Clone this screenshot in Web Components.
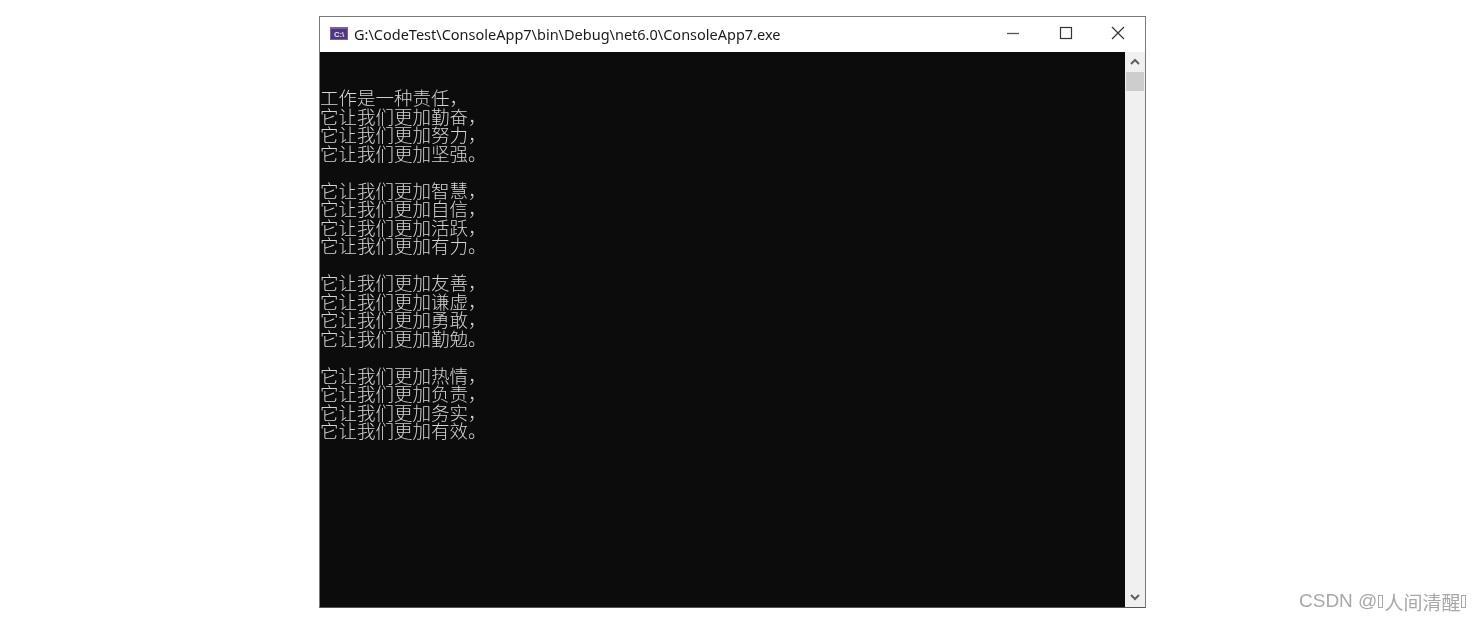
<!DOCTYPE html>
<html lang="zh">
<head>
<meta charset="utf-8">
<title>ConsoleApp7</title>
<style>
  html, body { margin: 0; height: 100%; background: #fff; overflow: hidden; }
</style>
</head>
<body>
<console-page>
  <console-window caption="G:\CodeTest\ConsoleApp7\bin\Debug\net6.0\ConsoleApp7.exe">
    <console-stanza>工作是一种责任，
它让我们更加勤奋，
它让我们更加努力，
它让我们更加坚强。</console-stanza>
    <console-stanza>它让我们更加智慧，
它让我们更加自信，
它让我们更加活跃，
它让我们更加有力。</console-stanza>
    <console-stanza>它让我们更加友善，
它让我们更加谦虚，
它让我们更加勇敢，
它让我们更加勤勉。</console-stanza>
    <console-stanza>它让我们更加热情，
它让我们更加负责，
它让我们更加务实，
它让我们更加有效。</console-stanza>
  </console-window>
  <csdn-mark></csdn-mark>
</console-page>

<script>
// page: window on the left, watermark in the bottom right corner
class ConsolePage extends HTMLElement {
    constructor() {
        super();
        this.attachShadow({mode: "open"});
        this.shadowRoot.innerHTML = `
            <style>
            :host {
                display: flex;
                box-sizing: border-box;
                height: 621px;
                padding: 16px 0 10px 319px;
                gap: 153px;
            }
            </style>
            <slot></slot>
        `;
    }
}

class ConsoleWindow extends HTMLElement {
    constructor() {
        super();
        this.attachShadow({mode: "open"});
        this.shadowRoot.innerHTML = `
            <style>
            :host {
                display: flex;
                flex-direction: column;
                box-sizing: border-box;
                width: 827px;
                height: 592px;
                border: 1px solid #7a7a7a;
                border-bottom-color: #555;
                background: #fff;
            }
            .body {
                flex: 1;
                display: flex;
                min-height: 0;
            }
            .screen {
                flex: 1;
                background: #0c0c0c;
                padding-top: 36px;
                color: #d4d4d4;
                font-family: "Noto Sans CJK SC", sans-serif;
                font-weight: 300;
                font-size: 18.5px;
                line-height: 18.5px;
            }
            /* the reference is a scaled screenshot, its text is a bit soft */
            .text { filter: blur(0.25px); }
            </style>
            <title-bar></title-bar>
            <div class="body">
                <div class="screen"><div class="text"><slot></slot></div></div>
                <console-scrollbar></console-scrollbar>
            </div>
        `;
    }

    connectedCallback() {
        this.shadowRoot.querySelector('title-bar').setAttribute('caption', this.getAttribute('caption'));
    }
}

class TitleBar extends HTMLElement {
    constructor() {
        super();
        this.attachShadow({mode: "open"});
        this.shadowRoot.innerHTML = `
            <style>
            :host {
                display: flex;
                align-items: center;
                height: 35px;
                flex: none;
                padding-left: 10px;
                font-family: "Noto Sans", sans-serif;
                font-size: 14.5px;
                color: #1a1a1a;
            }
            .icon { flex: none; margin-right: 6px; margin-top: -2px; }
            .caption { flex: 1; white-space: nowrap; margin-top: -2px; filter: blur(0.2px); }
            .btn {
                flex: none;
                width: 52.5px;
                height: 35px;
                margin-top: -3px;
                display: flex;
                align-items: center;
                justify-content: center;
            }
            .btn:last-child { margin-right: 0.75px; }
            </style>
            <svg class="icon" width="18" height="13" viewBox="0 0 18 13">
                <rect width="18" height="13" fill="#7a5fa8"/>
                <rect x="1" y="2" width="16" height="10" fill="#4f3585"/>
                <text x="9" y="10" font-family="Liberation Sans" font-size="7.5" font-weight="700" text-anchor="middle" fill="#e8e4f2">C:\\</text>
            </svg>
            <span class="caption"></span>
            <span class="btn">
                <svg width="14" height="14" viewBox="0 0 14 14"><path d="M1 7.5h12" stroke="#555" stroke-width="1.3"/></svg>
            </span>
            <span class="btn">
                <svg width="14" height="14" viewBox="0 0 14 14"><rect x="1.5" y="1.5" width="11" height="11" fill="none" stroke="#333" stroke-width="1.2"/></svg>
            </span>
            <span class="btn">
                <svg width="14" height="14" viewBox="0 0 14 14"><path d="M1 1l12 12M13 1L1 13" stroke="#333" stroke-width="1.2"/></svg>
            </span>
        `;
    }

    static get observedAttributes() { return ['caption']; }

    attributeChangedCallback(name, oldValue, value) {
        this.shadowRoot.querySelector('.caption').textContent = value;
    }
}

class ConsoleStanza extends HTMLElement {
    constructor() {
        super();
        this.attachShadow({mode: "open"});
        this.shadowRoot.innerHTML = `<style>
            :host {
                display: block;
                white-space: pre;
                margin-bottom: 18.5px;
            }
            </style><slot></slot>`;
    }
}

class ConsoleScrollbar extends HTMLElement {
    constructor() {
        super();
        this.attachShadow({mode: "open"});
        this.shadowRoot.innerHTML = `
            <style>
            :host {
                display: flex;
                flex-direction: column;
                flex: none;
                width: 20px;
                background: #f0f0f0;
            }
            .arrow {
                flex: none;
                height: 20px;
                display: flex;
                align-items: center;
                justify-content: center;
            }
            .thumb {
                flex: none;
                height: 19px;
                margin: 0 1px;
                background: #cdcdcd;
            }
            .track { flex: 1; }
            </style>
            <div class="arrow"><svg width="10" height="8" viewBox="0 0 10 8"><path d="M1 6l4-4 4 4" fill="none" stroke="#606060" stroke-width="2"/></svg></div>
            <div class="thumb"></div>
            <div class="track"></div>
            <div class="arrow"><svg width="10" height="8" viewBox="0 0 10 8"><path d="M1 2l4 4 4-4" fill="none" stroke="#606060" stroke-width="2"/></svg></div>
        `;
    }
}

class CsdnMark extends HTMLElement {
    constructor() {
        super();
        this.attachShadow({mode: "open"});
        this.shadowRoot.innerHTML = `
            <style>
            :host {
                display: flex;
                align-items: center;
                align-self: flex-end;
                height: 20px;
                white-space: nowrap;
                color: #a8a8a8;
                font-family: "Liberation Sans", "Noto Sans CJK SC", sans-serif;
                font-size: 19px;
                filter: blur(0.25px);
            }
            .tofu {
                display: inline-block;
                box-sizing: border-box;
                width: 5px;
                height: 13px;
                border: 1px solid #a8a8a8;
                margin: 0 1px;
            }
            </style>
            CSDN @<span class="tofu"></span>人间清醒<span class="tofu"></span>
        `;
    }
}

customElements.define('console-page', ConsolePage);
customElements.define('console-window', ConsoleWindow);
customElements.define('title-bar', TitleBar);
customElements.define('console-stanza', ConsoleStanza);
customElements.define('console-scrollbar', ConsoleScrollbar);
customElements.define('csdn-mark', CsdnMark);
</script>
</body>
</html>
